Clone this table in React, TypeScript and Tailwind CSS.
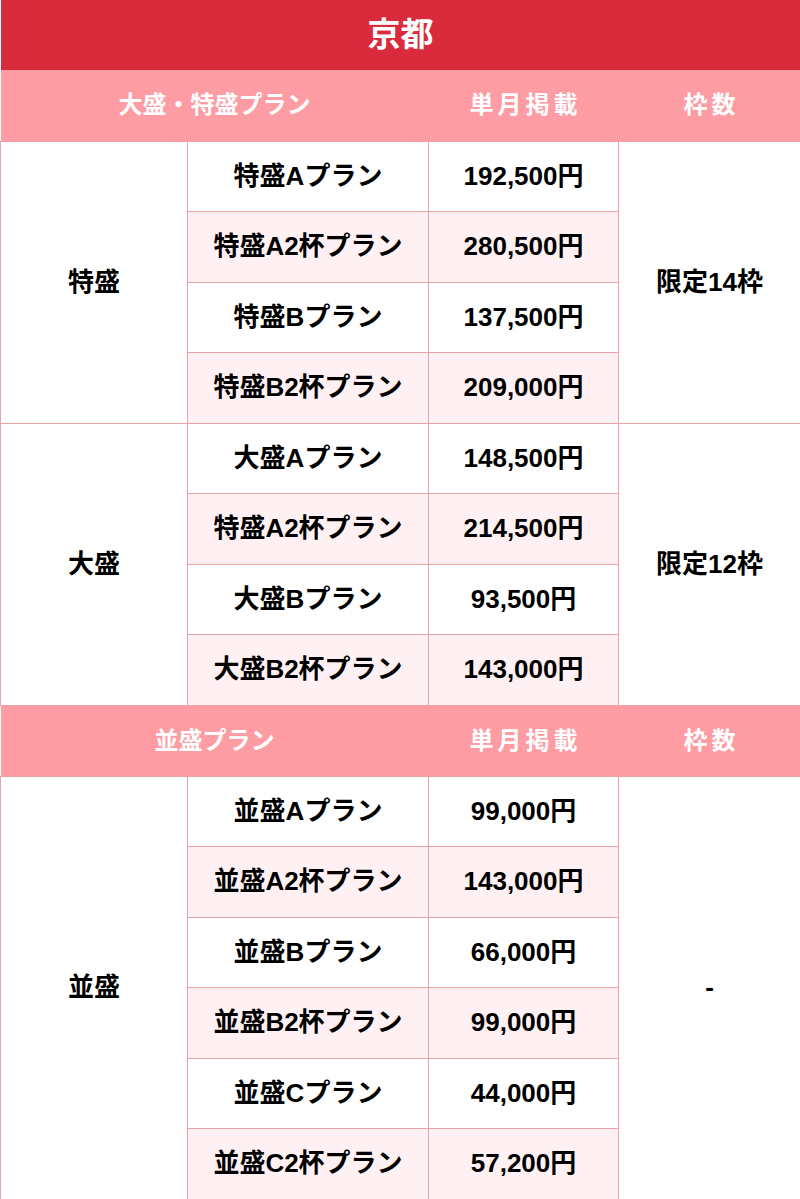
import React from "react";

const font = { fontFamily: '"Liberation Sans", "Noto Sans CJK JP", sans-serif' };

type Group = { name: string; frame: string; rows: [string, string][] };

const groups1: Group[] = [
  {
    name: "特盛",
    frame: "限定14枠",
    rows: [
      ["特盛Aプラン", "192,500円"],
      ["特盛A2杯プラン", "280,500円"],
      ["特盛Bプラン", "137,500円"],
      ["特盛B2杯プラン", "209,000円"],
    ],
  },
  {
    name: "大盛",
    frame: "限定12枠",
    rows: [
      ["大盛Aプラン", "148,500円"],
      ["特盛A2杯プラン", "214,500円"],
      ["大盛Bプラン", "93,500円"],
      ["大盛B2杯プラン", "143,000円"],
    ],
  },
];

const groups2: Group[] = [
  {
    name: "並盛",
    frame: "-",
    rows: [
      ["並盛Aプラン", "99,000円"],
      ["並盛A2杯プラン", "143,000円"],
      ["並盛Bプラン", "66,000円"],
      ["並盛B2杯プラン", "99,000円"],
      ["並盛Cプラン", "44,000円"],
      ["並盛C2杯プラン", "57,200円"],
    ],
  },
];

function HeaderRow({ label }: { label: string }) {
  return (
    <tr className="h-[71px] bg-[#fe9ca3] text-white text-[24px] font-bold">
      <td colSpan={2} className="text-center p-0">{label}</td>
      <td className="text-center tracking-[4px] p-0 pl-[4px]">単月掲載</td>
      <td className="text-center tracking-[4px] p-0 pl-[4px]">枠数</td>
    </tr>
  );
}

function GroupRows({ g }: { g: Group }) {
  return (
    <>
      {g.rows.map((r, i) => (
        <tr key={i} className="h-[70.5px] text-[26px] font-bold text-black">
          {i === 0 && (
            <td rowSpan={g.rows.length} className="border border-[#eda2aa] bg-white text-center p-0">
              {g.name}
            </td>
          )}
          <td className={`border border-[#eda2aa] text-center p-0 ${i % 2 === 1 ? "bg-[#fff1f3]" : "bg-white"}`}>
            {r[0]}
          </td>
          <td className={`border border-[#eda2aa] text-center p-0 ${i % 2 === 1 ? "bg-[#fff1f3]" : "bg-white"}`}>
            {r[1]}
          </td>
          {i === 0 && (
            <td rowSpan={g.rows.length} className="border border-[#eda2aa] bg-white text-center p-0">
              {g.frame}
            </td>
          )}
        </tr>
      ))}
    </>
  );
}

export default function App() {
  return (
    <div className="w-[800px] bg-white" style={font}>
      <table className="w-[800px] border-collapse table-fixed">
        <colgroup>
          <col className="w-[187px]" />
          <col className="w-[241px]" />
          <col className="w-[190px]" />
          <col className="w-[182px]" />
        </colgroup>
        <tbody>
          <tr className="h-[70px] bg-[#d92b3b] text-white">
            <td colSpan={4} className="text-center text-[33px] font-bold p-0">京都</td>
          </tr>
          <HeaderRow label="大盛・特盛プラン" />
          {groups1.map((g) => (
            <GroupRows key={g.name} g={g} />
          ))}
          <HeaderRow label="並盛プラン" />
          {groups2.map((g) => (
            <GroupRows key={g.name} g={g} />
          ))}
        </tbody>
      </table>
    </div>
  );
}
